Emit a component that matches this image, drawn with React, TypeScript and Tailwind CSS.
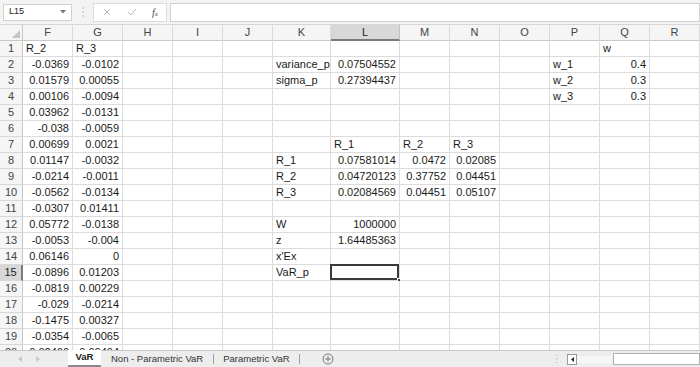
const COLS = ['F', 'G', 'H', 'I', 'J', 'K', 'L', 'M', 'N', 'O', 'P', 'Q', 'R'];

const WIDTH: Record<string, string> = {
  F: 'w-[50px]',
  G: 'w-[50px]',
  H: 'w-[50px]',
  I: 'w-[50px]',
  J: 'w-[50px]',
  K: 'w-[58px]',
  L: 'w-[69px]',
  M: 'w-[50px]',
  N: 'w-[50px]',
  O: 'w-[50px]',
  P: 'w-[50px]',
  Q: 'w-[50px]',
  R: 'w-[50px]',
};

const returns = [
  ['-0.0369', '-0.0102'],
  ['0.01579', '0.00055'],
  ['0.00106', '-0.0094'],
  ['0.03962', '-0.0131'],
  ['-0.038', '-0.0059'],
  ['0.00699', '0.0021'],
  ['0.01147', '-0.0032'],
  ['-0.0214', '-0.0011'],
  ['-0.0562', '-0.0134'],
  ['-0.0307', '0.01411'],
  ['0.05772', '-0.0138'],
  ['-0.0053', '-0.004'],
  ['0.06146', '0'],
  ['-0.0896', '0.01203'],
  ['-0.0819', '0.00229'],
  ['-0.029', '-0.0214'],
  ['-0.1475', '0.00327'],
  ['-0.0354', '-0.0065'],
  ['0.02466', '0.00404'],
];

const sheet: Record<number, Record<string, string>> = {
  1: { F: 'R_2', G: 'R_3', Q: 'w' },
  2: { K: 'variance_p', L: '0.07504552', P: 'w_1', Q: '0.4' },
  3: { K: 'sigma_p', L: '0.27394437', P: 'w_2', Q: '0.3' },
  4: { P: 'w_3', Q: '0.3' },
  7: { L: 'R_1', M: 'R_2', N: 'R_3' },
  8: { K: 'R_1', L: '0.07581014', M: '0.0472', N: '0.02085' },
  9: { K: 'R_2', L: '0.04720123', M: '0.37752', N: '0.04451' },
  10: { K: 'R_3', L: '0.02084569', M: '0.04451', N: '0.05107' },
  12: { K: 'W', L: '1000000' },
  13: { K: 'z', L: '1.64485363' },
  14: { K: "x'Ex" },
  15: { K: 'VaR_p' },
};

returns.forEach(([f, g], i) => {
  const r = i + 2;
  sheet[r] = { ...(sheet[r] || {}), F: f, G: g };
});

const isNum = (v: string) => /^-?[\d.]+$/.test(v);

function FormulaBar() {
  return (
    <div className="h-[25px] bg-[#f3f3f3] flex items-center border-b border-[#d6d6d6] shrink-0">
      <div className="ml-[3px] w-[69px] h-[17px] bg-white border border-[#d0d0d0] flex items-center justify-between px-[5px]">
        <span className="text-[9px] text-[#222]">L15</span>
        <svg width="6" height="4" viewBox="0 0 6 4">
          <path d="M0 0 L6 0 L3 3.5 Z" fill="#777" />
        </svg>
      </div>
      <div className="w-[21px] flex justify-center">
        <svg width="2" height="12" viewBox="0 0 2 12">
          <circle cx="1" cy="2" r="0.8" fill="#bbb" />
          <circle cx="1" cy="6" r="0.8" fill="#bbb" />
          <circle cx="1" cy="10" r="0.8" fill="#bbb" />
        </svg>
      </div>
      <div className="w-[74px] h-[19px] bg-white border border-[#dcdcdc] flex items-center">
        <div className="w-[26px] flex justify-center">
          <svg width="8" height="8" viewBox="0 0 8 8">
            <path d="M1 1 L7 7 M7 1 L1 7" stroke="#b8b8b8" strokeWidth="1" />
          </svg>
        </div>
        <div className="w-[24px] flex justify-center">
          <svg width="10" height="8" viewBox="0 0 10 8">
            <path d="M1 4 L4 7 L9 1" stroke="#b8b8b8" strokeWidth="1" fill="none" />
          </svg>
        </div>
        <div className="w-[22px] flex justify-center">
          <span className="text-[10px] italic text-[#444] font-['Liberation_Serif',serif]">
            f<span className="text-[7px]">x</span>
          </span>
        </div>
      </div>
      <div className="ml-[3px] flex-1 h-[19px] bg-white border border-[#d0d0d0]" />
    </div>
  );
}

function ColumnHeader() {
  return (
    <div className="flex h-[16px] shrink-0">
      <div className="w-[23px] h-[16px] bg-[#f5f5f5] border-r border-b border-[#c8c8c8] flex items-end justify-end p-[2px]">
        <svg width="8" height="8" viewBox="0 0 8 8">
          <path d="M8 0 L8 8 L0 8 Z" fill="#c4c4c4" />
        </svg>
      </div>
      {COLS.map((c) => (
        <div
          key={c}
          className={`${WIDTH[c]} shrink-0 h-[16px] flex items-center justify-center text-[11px] border-r ${
            c === 'L'
              ? 'bg-[#d8d8d8] border-b-2 border-b-[#7a7a7a] border-r-[#c0c0c0] text-[#222]'
              : 'bg-[#f5f5f5] border-b border-b-[#c8c8c8] border-r-[#dadada] text-[#444]'
          }`}
        >
          {c}
        </div>
      ))}
    </div>
  );
}

function Row({ n }: { n: number }) {
  const data = sheet[n] || {};
  const selectedRow = n === 15;
  return (
    <div className="flex h-[16px] shrink-0">
      <div
        className={`w-[23px] shrink-0 h-[16px] flex items-center justify-center text-[11px] border-b border-b-[#d8d8d8] ${
          selectedRow
            ? 'bg-[#d8d8d8] border-r-2 border-r-[#7a7a7a] text-[#222]'
            : 'bg-[#f5f5f5] border-r border-r-[#c8c8c8] text-[#444]'
        }`}
      >
        {n}
      </div>
      {COLS.map((c) => {
        const v = data[c];
        const selected = n === 15 && c === 'L';
        return (
          <div
            key={c}
            className={`${WIDTH[c]} shrink-0 h-[16px] relative border-r border-b border-[#dcdcdc] bg-white text-[11px] leading-[15px] text-[#1a1a1a] whitespace-nowrap overflow-visible flex items-end ${
              v && isNum(v) ? 'justify-end pr-[3px]' : 'justify-start pl-[3px]'
            }`}
          >
            {v}
            {selected && (
              <>
                <div className="absolute -left-[1px] -top-[1px] right-0 bottom-0 border-2 border-[#3a3a3a]" />
                <div className="absolute -right-[3px] -bottom-[3px] w-[5px] h-[5px] bg-[#3a3a3a] border border-white" />
              </>
            )}
          </div>
        );
      })}
    </div>
  );
}

function TabBar() {
  return (
    <div className="h-[17px] shrink-0 bg-[#ededed] border-t border-[#c6c6c6] flex items-stretch text-[9.5px] text-[#333]">
      <div className="w-[68px] flex items-center pl-[18px] gap-[14px]">
        <svg width="4" height="6" viewBox="0 0 4 6">
          <path d="M4 0 L0 3 L4 6 Z" fill="#c8c8c8" />
        </svg>
        <svg width="4" height="6" viewBox="0 0 4 6">
          <path d="M0 0 L4 3 L0 6 Z" fill="#c8c8c8" />
        </svg>
      </div>
      <div className="w-[33px] -mt-[1px] bg-white border-b-2 border-[#8a8a8a] flex items-center justify-center font-bold text-[#222]">
        VaR
      </div>
      <div className="flex items-center pl-[10px] pr-[10px]">Non - Parametric VaR</div>
      <div className="w-px bg-[#a0a0a0] my-[3px]" />
      <div className="flex items-center pl-[9px] pr-[9px]">Parametric VaR</div>
      <div className="w-px bg-[#a0a0a0] my-[3px]" />
      <div className="flex items-center pl-[22px]">
        <svg width="12" height="12" viewBox="0 0 12 12">
          <circle cx="6" cy="6" r="5" fill="none" stroke="#777" strokeWidth="1" />
          <path d="M6 3.2 V8.8 M3.2 6 H8.8" stroke="#777" strokeWidth="1" />
        </svg>
      </div>
      <div className="flex-1" />
      <div className="flex items-center pr-[9px]">
        <svg width="2" height="10" viewBox="0 0 2 10">
          <circle cx="1" cy="1.5" r="0.7" fill="#bbb" />
          <circle cx="1" cy="5" r="0.7" fill="#bbb" />
          <circle cx="1" cy="8.5" r="0.7" fill="#bbb" />
        </svg>
      </div>
      <div className="flex items-center">
        <div className="w-[10px] h-[11px] bg-white border border-[#9a9a9a] flex items-center justify-center">
          <svg width="3" height="5" viewBox="0 0 3 5">
            <path d="M3 0 L0 2.5 L3 5 Z" fill="#222" />
          </svg>
        </div>
        <div className="w-[35px] h-[7px] bg-[#f6f6f6]" />
        <div className="w-[87px] h-[12px] bg-white border border-[#b0b0b0] ml-[1px]" />
      </div>
    </div>
  );
}

export default function App() {
  const rows = Array.from({ length: 20 }, (_, i) => i + 1);
  return (
    <div className="w-[700px] h-[367px] overflow-hidden bg-white flex flex-col font-['Liberation_Sans',Arial,sans-serif]">
      <FormulaBar />
      <div className="flex-1 overflow-hidden flex flex-col">
        <ColumnHeader />
        {rows.map((n) => (
          <Row key={n} n={n} />
        ))}
      </div>
      <TabBar />
    </div>
  );
}
